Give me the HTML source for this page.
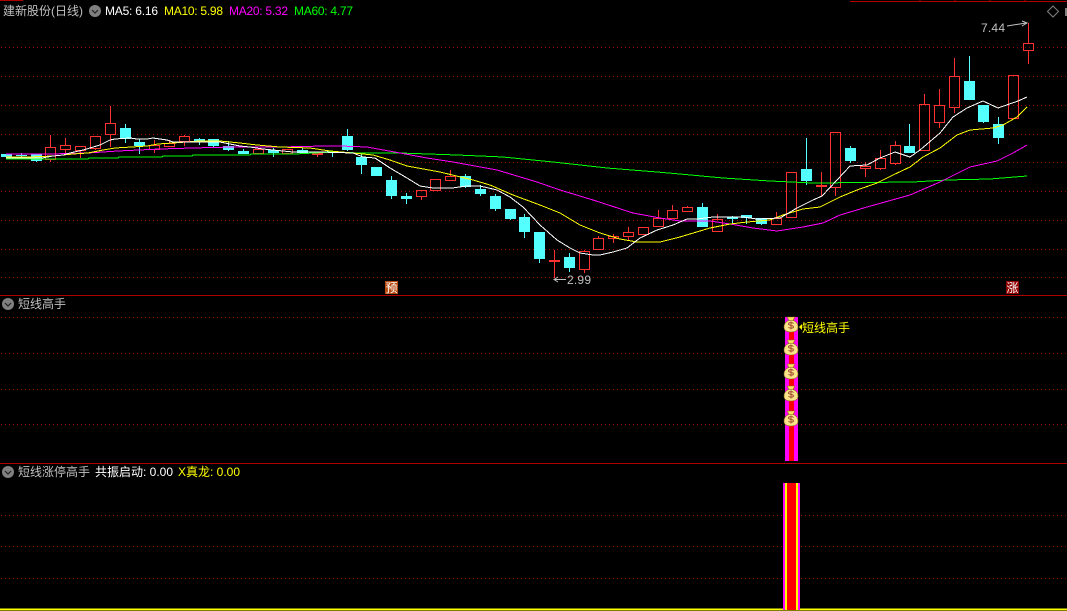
<!DOCTYPE html>
<html><head><meta charset="utf-8"><title>K</title>
<style>
html,body{margin:0;padding:0;background:#000;width:1067px;height:611px;overflow:hidden}
svg{display:block}
text{font-family:"Liberation Sans","WenQuanYi Zen Hei","Noto Sans CJK SC",sans-serif;font-size:12px}
</style></head><body>
<svg width="1067" height="611" viewBox="0 0 1067 611" xmlns="http://www.w3.org/2000/svg">
<rect width="1067" height="611" fill="#000"/>
<g stroke="#900000" stroke-dasharray="1 3" fill="none" shape-rendering="crispEdges">
<path d="M1 47.5H1067M1 76.5H1067M1 105.5H1067M1 134.5H1067M1 162.5H1067M1 191.5H1067M1 220.5H1067M1 249.5H1067M1 277.5H1067M1 317.5H1067M1 353.5H1067M1 389.5H1067M1 424.5H1067M1 515.5H1067M1 546.5H1067M1 578.5H1067"/>
</g>
<g stroke="#b00000" fill="none" shape-rendering="crispEdges">
<path d="M0 295.5H1067M0 463.5H1067M0 .5H23M850 1.5H1067"/>
<path d="M920 0V2M955 0V2M990 0V2M1025 0V2"/>
</g>
<path d="M0 609.5H1067" stroke="#ffff00" stroke-width="2" shape-rendering="crispEdges"/>

<!-- cyan candles -->
<g shape-rendering="crispEdges">
<path fill="#54ffff" d="M1 154h11v3h-11zM16 155h11v1h-11zM31 154h11v7h-11zM120 128h11v11h-11zM134 142h11v4h-11zM194 139h11v3h-11zM208 139h11v7h-11zM223 146h11v4h-11zM238 151h11v3h-11zM268 150h11v3h-11zM297 150h11v3h-11zM327 151h11v2h-11zM342 136h11v14h-11zM356 157h11v8h-11zM371 167h11v9h-11zM386 180h11v16h-11zM401 196h11v3h-11zM460 176h11v11h-11zM475 189h11v5h-11zM490 196h11v13h-11zM505 209h11v10h-11zM519 217h11v15h-11zM534 232h11v27h-11zM564 257h11v11h-11zM697 207h11v20h-11zM727 217h11v2h-11zM741 215h11v3h-11zM756 218h11v6h-11zM801 169h11v12h-11zM845 148h11v13h-11zM904 146h11v7h-11zM964 81h11v19h-11zM978 105h11v17h-11zM993 124h11v14h-11z"/>
<path stroke="#54ffff" fill="none" d="M21.5 153V158M36.5 161V162M125.5 124V143M139.5 139V154M199.5 138V145M213.5 146V147M228.5 141V151M243.5 149V154M273.5 148V157M302.5 148V154M332.5 151V157M347.5 129V151M361.5 153V174M391.5 176V199M406.5 193V204M465.5 174V188M480.5 185V196M495.5 194V211M510.5 219V220M524.5 214V238M539.5 259V263M569.5 253V272M702.5 203V207M732.5 216V224M746.5 218V224M761.5 224V225M806.5 138V185M850.5 146V163M909.5 124V146M969.5 56V81M983.5 122V123M998.5 117V144"/>
<!-- red candles -->
<path stroke="#ff3232" fill="none" d="M45.5 147.5h10v12h-10zM50.5 135V147M50.5 160V162M60.5 145.5h10v4h-10zM65.5 138V145M65.5 150V153M75.5 146.5h10v4h-10zM80.5 151V158M90.5 136.5h10v12h-10zM95.5 149V150M105.5 123.5h10v11h-10zM110.5 106V123M110.5 135V147M149.5 145.5h10v4h-10zM154.5 140V145M154.5 150V153M164.5 143.5h10v3h-10zM169.5 140V143M179.5 136.5h10v5h-10zM184.5 135V136M184.5 142V146M253.5 149.5h10v4h-10zM282.5 149.5h10v4h-10zM317.5 155V157M416.5 190.5h10v6h-10zM421.5 197V200M430.5 179.5h10v11h-10zM445.5 176.5h10v4h-10zM450.5 170V176M554.5 250V278M579.5 251.5h10v18h-10zM584.5 250V251M584.5 270V273M593.5 238.5h10v11h-10zM598.5 236V238M608.5 236.5h10v2h-10zM613.5 234V236M613.5 239V243M623.5 232.5h10v4h-10zM628.5 227V232M628.5 237V241M638.5 227.5h10v7h-10zM653.5 218.5h10v8h-10zM658.5 210V218M667.5 210.5h10v8h-10zM672.5 205V210M682.5 207.5h10v4h-10zM687.5 206V207M712.5 219.5h10v12h-10zM717.5 214V219M771.5 218.5h10v6h-10zM776.5 212V218M786.5 172.5h10v45h-10zM821.5 172V185M821.5 187V196M830.5 132.5h10v55h-10zM835.5 188V196M860.5 166.5h10v2h-10zM865.5 162V166M865.5 169V177M875.5 158.5h10v10h-10zM880.5 150V158M880.5 169V170M890.5 145.5h10v18h-10zM895.5 141V145M895.5 164V165M919.5 104.5h10v46h-10zM924.5 94V104M934.5 105.5h10v17h-10zM939.5 89V105M939.5 123V128M949.5 76.5h10v31h-10zM954.5 58V76M954.5 108V113M1008.5 75.5h10v43h-10zM1023.5 43.5h10v7h-10zM1028.5 23V43M1028.5 51V64"/>
<path fill="#ff3232" d="M312 153h11v2h-11zM549 260h11v2h-11zM816 185h11v2h-11z"/>
</g>

<!-- moving averages -->
<g fill="none" stroke-width="1" shape-rendering="crispEdges">
<polyline stroke="#00ff00" points="6,159 88,159 89,158 118,158 119,157 162,157 163,156 192,156 193,155 250,155 251,154 295,154 333,152 360,153 400,153 457,155 503,157 553,162 607,168 657,172 680,174 723,178 770,181 813,183 913,182 947,180 990,179 1027,176"/>
<polyline stroke="#ff00ff" points="6,154 50,154 88,153 118,151 160,149 192,148 233,147 280,147 325,146 340,146 367,147 400,153 427,158 453,162 497,170 537,182 560,190 593,200 633,213 660,218 680,221 710,221 730,224 753,228 777,231 803,227 823,223 840,215 867,207 910,195 940,182 970,167 997,161 1013,153 1027,145"/>
<polyline stroke="#ffff00" points="6,157 29,157 53,156 73,154 88,153 103,150 115,148 132,147 147,146 158,144 173,143 200,141 220,141 240,143 257,145 280,147 310,148 330,151 353,153 373,155 390,160 407,166 440,172 473,180 490,185 513,195 540,205 560,213 580,225 600,233 620,239 637,242 660,242 680,237 710,228 730,224 747,222 770,220 783,215 803,209 820,207 840,197 857,190 877,183 893,175 910,167 923,157 940,148 957,135 970,130 993,128 1003,125 1017,117 1027,107"/>
<polyline stroke="#ffffff" points="6,158 42,158 53,156 63,155 70,153 83,150 90,148 100,145 110,140 115,139 130,138 137,139 147,139 153,138 160,139 167,140 173,142 200,142 220,142 230,144 240,146 250,147 263,149 273,150 293,152 320,152 353,153 363,157 375,158 390,168 407,178 420,186 433,188 452,188 467,186 480,186 497,190 510,197 523,207 540,225 557,240 570,248 580,253 593,255 600,255 613,252 627,248 640,238 657,230 673,225 687,219 697,219 713,217 743,217 757,219 780,218 797,208 813,200 822,196 837,180 850,166 867,165 880,158 895,152 910,157 920,150 940,133 953,117 967,108 983,101 998,108 1018,101 1027,97"/>
</g>

<!-- header -->
<text x="3" y="15" fill="#c0c0c0">建新股份(日线)</text>
<circle cx="95" cy="11" r="6" fill="#808080"/>
<path d="M92 10l3 3 3-3" stroke="#222" fill="none" stroke-width="1.2"/>
<text x="105" y="15" fill="#ffffff" textLength="53">MA5: 6.16</text>
<text x="164" y="15" fill="#ffff00" textLength="59">MA10: 5.98</text>
<text x="229" y="15" fill="#ff00ff" textLength="59">MA20: 5.32</text>
<text x="294" y="15" fill="#00ff00" textLength="59">MA60: 4.77</text>

<!-- top right -->
<path d="M1053 6l5.500 5.500-5.500 5.500-5.500-5.500z" fill="none" stroke="#808080"/>
<rect x="1065" y="8" width="2" height="8" fill="#808080"/>
<text x="981" y="32" fill="#c0c0c0" textLength="24">7.44</text>
<path d="M1007 26L1026 23M1022 21l5 2-5 3" stroke="#c0c0c0" fill="none"/>
<text x="567" y="284" fill="#c0c0c0" textLength="24">2.99</text>
<path d="M566 279.500H554M558 277l-4 2.500 4 2.500" stroke="#c0c0c0" fill="none"/>

<!-- markers -->
<rect x="385" y="281" width="13" height="13" fill="#b84a10"/>
<text x="385.500" y="292" fill="#fff">预</text>
<rect x="1006" y="281" width="13" height="13" fill="#900000"/>
<text x="1006.500" y="292" fill="#fff">涨</text>

<!-- panel 2 -->
<circle cx="8" cy="304" r="6" fill="#808080"/>
<path d="M5 303l3 3 3-3" stroke="#222" fill="none" stroke-width="1.2"/>
<text x="18" y="308" fill="#c0c0c0">短线高手</text>
<g shape-rendering="crispEdges">
<rect x="785" y="317" width="13" height="144" fill="#ff00ff"/>
<rect x="789" y="317" width="5" height="144" fill="#ff0000"/>
</g>
<defs>
<g id="bag">
<path d="M-4-8h8l-2 3.500h-4z" fill="#ffe060" stroke="#8a6a20" stroke-width=".6"/>
<path d="M-2.500-4.500h5c3 1.500 4.500 4 4.500 6.500 0 3.500-2.500 5-7 5s-7-1.500-7-5c0-2.500 1.500-5 4.500-6.500z" fill="#fbe488" stroke="#8a6a20" stroke-width=".6"/>
<path d="M2.500-1.500c-1-1.200-5-1.200-5 .5s5 1 5 2.800-4 1.700-5 .5M0-3.500V4.500" fill="none" stroke="#a04a30" stroke-width="1"/>
</g>
</defs>
<use href="#bag" x="791" y="325"/>
<use href="#bag" x="791" y="348"/>
<use href="#bag" x="791" y="372"/>
<use href="#bag" x="791" y="394"/>
<use href="#bag" x="791" y="419"/>
<path d="M802 324l-3 3 3 3z" fill="#ffff00"/>
<text x="802" y="332" fill="#ffff00">短线高手</text>

<!-- panel 3 -->
<circle cx="8" cy="472" r="6" fill="#808080"/>
<path d="M5 471l3 3 3-3" stroke="#222" fill="none" stroke-width="1.2"/>
<text x="18" y="476" fill="#c0c0c0">短线涨停高手</text>
<text x="95" y="476" fill="#ffffff">共振启动: 0.00</text>
<text x="178" y="476" fill="#ffff00">X真龙: 0.00</text>
<g shape-rendering="crispEdges">
<rect x="783" y="483" width="17" height="127" fill="#ff00ff"/>
<rect x="785" y="483" width="13" height="127" fill="#ffff00"/>
<rect x="787" y="483" width="9" height="127" fill="#ff0000"/>
</g>
</svg>
</body></html>
